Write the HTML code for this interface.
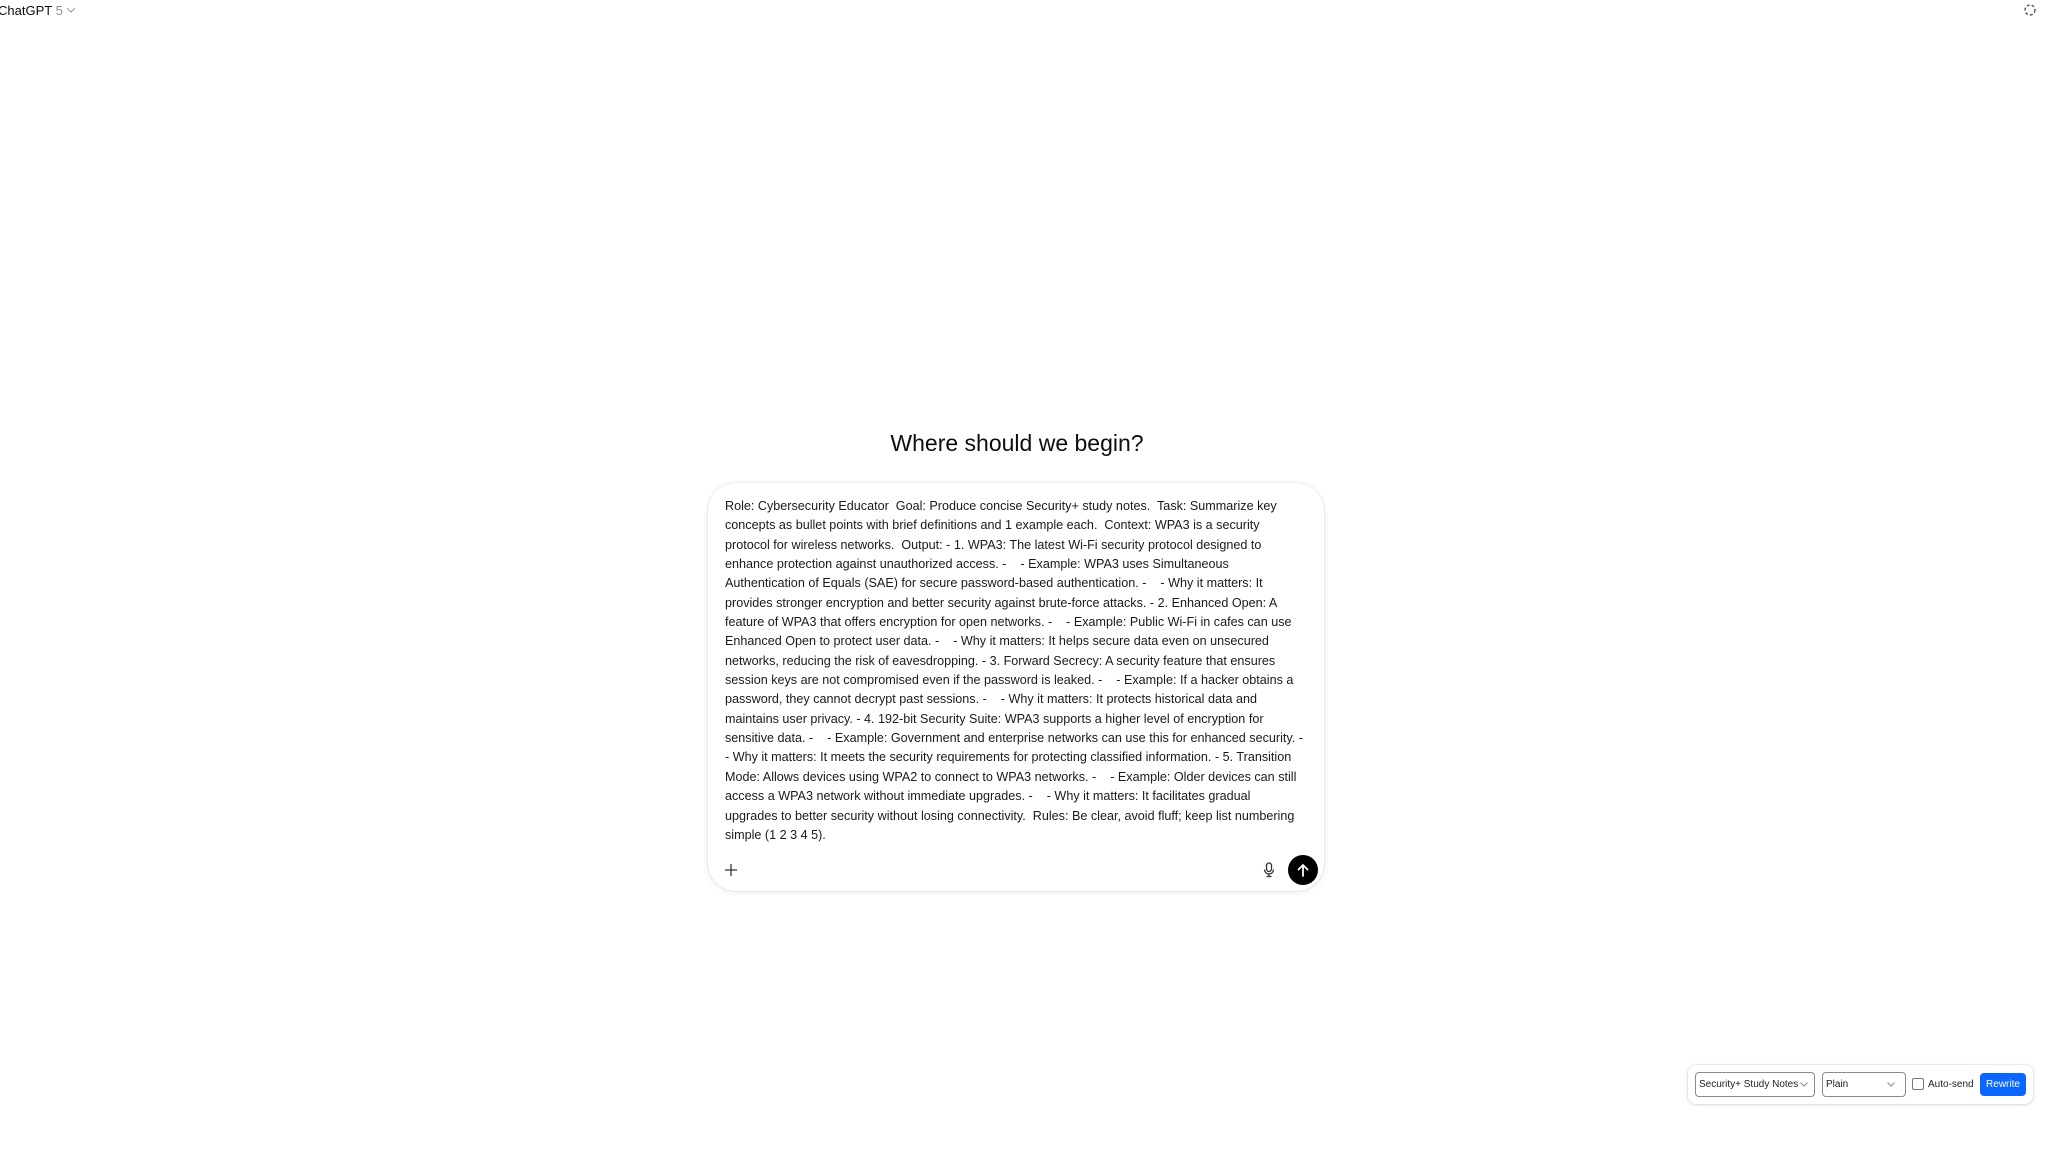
<!DOCTYPE html>
<html><head><meta charset="utf-8"><style>
html,body{margin:0;padding:0;width:2048px;height:1160px;background:#fff;overflow:hidden;font-family:"Liberation Sans",sans-serif;color:#0d0d0d;}
.top{position:absolute;left:-2px;top:2px;font-size:13px;line-height:17px;color:#0d0d0d;}
.top span{color:#8f8f8f}
h1{position:absolute;left:0;width:2034px;top:423px;margin:0;text-align:center;font-weight:400;font-size:23px;line-height:40px;color:#0d0d0d;}
.card{position:absolute;left:708px;top:483px;width:616px;height:408px;border-radius:28px;background:#fff;box-shadow:0 1px 6px rgba(0,0,0,.10),0 0 0 1px rgba(0,0,0,.04);}
.txt{position:absolute;left:17px;top:14px;font-size:12.6px;line-height:19.35px;white-space:nowrap;color:#1a1a1a;}
.plus{position:absolute;left:16px;top:380px;}
.mic{position:absolute;left:555px;top:379px;}
.send{position:absolute;left:580px;top:372px;width:30px;height:30px;border-radius:50%;background:#000;}
.tb{position:absolute;left:1688px;top:1065px;width:345px;height:39px;border-radius:8px;background:#fff;box-shadow:0 1px 4px rgba(0,0,0,.12),0 0 0 1px rgba(0,0,0,.05);font-size:10px;}
.sel{position:absolute;top:7px;height:25px;border:1px solid #8a8a8a;border-radius:4px;box-sizing:border-box;line-height:23px;padding-left:3px;color:#222;}
.cb{position:absolute;left:224px;top:13px;width:12px;height:12px;border:1px solid #777;border-radius:2px;box-sizing:border-box;}
.as{position:absolute;left:240px;top:13px;line-height:13px;color:#222;}
.rw{position:absolute;left:292px;top:8px;width:46px;height:23px;border-radius:4px;background:#0a66ff;color:#fff;line-height:23px;text-align:center;}
</style></head><body>
<div class="top">ChatGPT <span>5</span> <svg width="10" height="8" viewBox="0 0 10 8" style="vertical-align:1px"><path d="M1 2l4 4 4-4" fill="none" stroke="#999" stroke-width="1"/></svg></div>
<svg style="position:absolute;left:2023px;top:3px" width="14" height="14" viewBox="0 0 14 14"><circle cx="7" cy="7" r="5" fill="none" stroke="#555" stroke-width="1.4" stroke-dasharray="3 2"/></svg>
<h1>Where should we begin?</h1>
<div class="card">
<div class="txt">Role: Cybersecurity Educator&nbsp; Goal: Produce concise Security+ study notes.&nbsp; Task: Summarize key<br>concepts as bullet points with brief definitions and 1 example each.&nbsp; Context: WPA3 is a security<br>protocol for wireless networks.&nbsp; Output: - 1. WPA3: The latest Wi-Fi security protocol designed to<br>enhance protection against unauthorized access. - &nbsp;&nbsp; - Example: WPA3 uses Simultaneous<br>Authentication of Equals (SAE) for secure password-based authentication. - &nbsp;&nbsp; - Why it matters: It<br>provides stronger encryption and better security against brute-force attacks. - 2. Enhanced Open: A<br>feature of WPA3 that offers encryption for open networks. - &nbsp;&nbsp; - Example: Public Wi-Fi in cafes can use<br>Enhanced Open to protect user data. - &nbsp;&nbsp; - Why it matters: It helps secure data even on unsecured<br>networks, reducing the risk of eavesdropping. - 3. Forward Secrecy: A security feature that ensures<br>session keys are not compromised even if the password is leaked. - &nbsp;&nbsp; - Example: If a hacker obtains a<br>password, they cannot decrypt past sessions. - &nbsp;&nbsp; - Why it matters: It protects historical data and<br>maintains user privacy. - 4. 192-bit Security Suite: WPA3 supports a higher level of encryption for<br>sensitive data. - &nbsp;&nbsp; - Example: Government and enterprise networks can use this for enhanced security. -<br>- Why it matters: It meets the security requirements for protecting classified information. - 5. Transition<br>Mode: Allows devices using WPA2 to connect to WPA3 networks. - &nbsp;&nbsp; - Example: Older devices can still<br>access a WPA3 network without immediate upgrades. - &nbsp;&nbsp; - Why it matters: It facilitates gradual<br>upgrades to better security without losing connectivity.&nbsp; Rules: Be clear, avoid fluff; keep list numbering<br>simple (1 2 3 4 5).</div>
<svg class="plus" width="14" height="14" viewBox="0 0 14 14"><path d="M7 1v12M1 7h12" stroke="#333" stroke-width="1.3"/></svg>
<svg class="mic" width="12" height="16" viewBox="0 0 12 16"><rect x="3.5" y="1" width="5" height="8.5" rx="2.5" fill="none" stroke="#333" stroke-width="1.3"/><path d="M1.5 7.5a4.5 4.5 0 0 0 9 0M6 12v2.5M3.5 14.5h5" fill="none" stroke="#333" stroke-width="1.3"/></svg>
<div class="send"><svg width="30" height="30" viewBox="0 0 30 30"><path d="M15 21V10M10.5 14.5L15 10l4.5 4.5" fill="none" stroke="#fff" stroke-width="1.8" stroke-linecap="round" stroke-linejoin="round"/></svg></div>
</div>
<div class="tb">
<div class="sel" style="left:7px;width:120px">Security+ Study Notes<svg style="position:absolute;right:6px;top:9px" width="8" height="5" viewBox="0 0 8 5"><path d="M.5.5l3.5 3.5 3.5-3.5" fill="none" stroke="#888"/></svg></div>
<div class="sel" style="left:134px;width:84px">Plain<svg style="position:absolute;right:10px;top:9px" width="8" height="5" viewBox="0 0 8 5"><path d="M.5.5l3.5 3.5 3.5-3.5" fill="none" stroke="#888"/></svg></div>
<div class="cb"></div>
<div class="as">Auto-send</div>
<div class="rw">Rewrite</div>
</div>
</body></html>
